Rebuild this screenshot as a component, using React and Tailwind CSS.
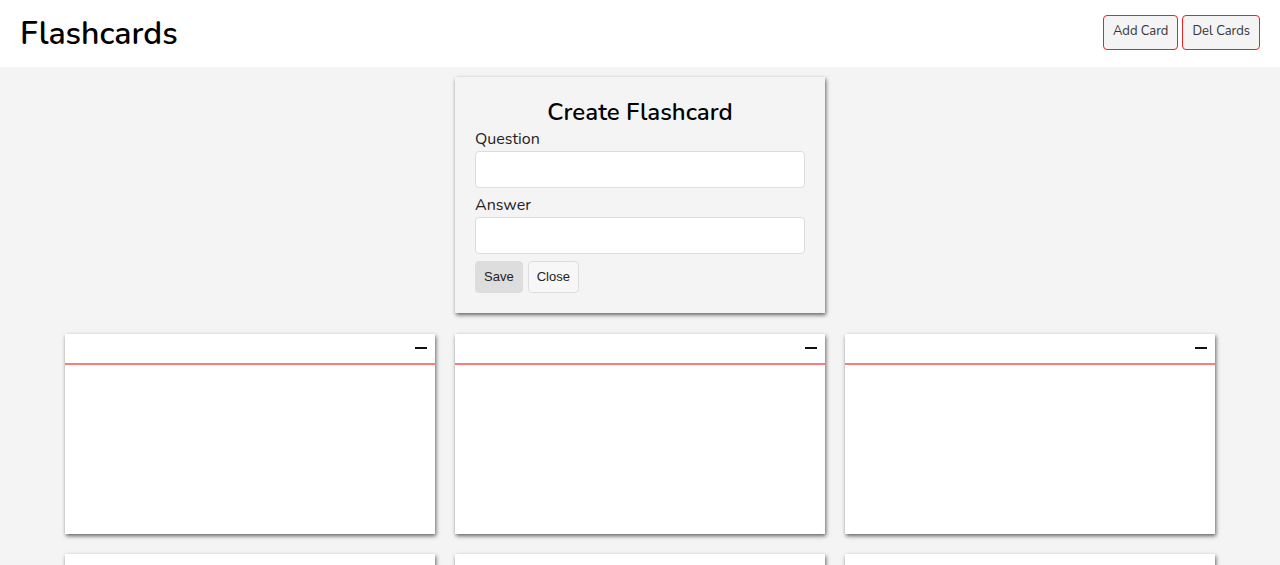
import React from 'react';

const font = { fontFamily: '"Nunito", "Lato", "Open Sans", sans-serif' };
const btnFont = { fontFamily: '"Liberation Sans", Arial, sans-serif' };

function Card() {
    return (
        <div className="bg-white h-[200px] shadow-[1px_2px_4px_rgba(0,0,0,0.6)] flex flex-col">
            <div className="h-[31px] border-b-2 border-[#ff7b7b] flex justify-end items-start pt-[13px] pr-[8px]">
                <div className="w-[12px] h-[2px] bg-[#111]" />
            </div>
        </div>
    );
}

export default function App() {
    const cards = [1, 2, 3, 4, 5, 6];

    return (
        <div className="min-h-screen bg-[#f4f4f4] text-black" style={font}>
            <header className="bg-white h-[67px] flex justify-between items-center px-[20px]">
                <h1 className="text-[32px] font-semibold">Flashcards</h1>
                <div className="flex gap-[4px] mt-[-3px]">
                    <button className="h-[35px] px-[9px] text-[13px] text-[#333] bg-[#f4f4f4] border border-[#e22] rounded-[4px]">Add Card</button>
                    <button className="h-[35px] px-[9px] text-[13px] text-[#333] bg-[#f4f4f4] border border-[#e22] rounded-[4px]">Del Cards</button>
                </div>
            </header>

            <main className="pt-[10px] flex flex-col items-center">
                <div className="w-[370px] bg-[#f4f4f4] px-[20px] pt-[20px] pb-[20px] shadow-[1px_2px_4px_rgba(0,0,0,0.6)]">
                    <h2 className="text-center text-[24px] font-semibold leading-[30px]">Create Flashcard</h2>
                    <label className="block text-[16px] text-[#222] leading-[24px]">Question</label>
                    <input className="w-full h-[37px] bg-white border border-[#ddd] rounded-[4px]" />
                    <label className="block text-[16px] text-[#222] leading-[24px] mt-[5px]">Answer</label>
                    <input className="w-full h-[37px] bg-white border border-[#ddd] rounded-[4px]" />
                    <div className="flex gap-[5px] mt-[7px]">
                        <button className="h-[32px] px-[8px] bg-[#ddd] border border-[#ddd] rounded-[4px] text-[13px] text-[#222]" style={btnFont}>Save</button>
                        <button className="h-[32px] px-[8px] bg-[#f7f7f7] border border-[#ddd] rounded-[4px] text-[13px] text-[#222]" style={btnFont}>Close</button>
                    </div>
                </div>

                <div className="grid grid-cols-[repeat(3,370px)] gap-[20px] mt-[21px] pb-[20px]">
                    {cards.map((c) => (
                        <Card key={c} />
                    ))}
                </div>
            </main>
        </div>
    );
}
